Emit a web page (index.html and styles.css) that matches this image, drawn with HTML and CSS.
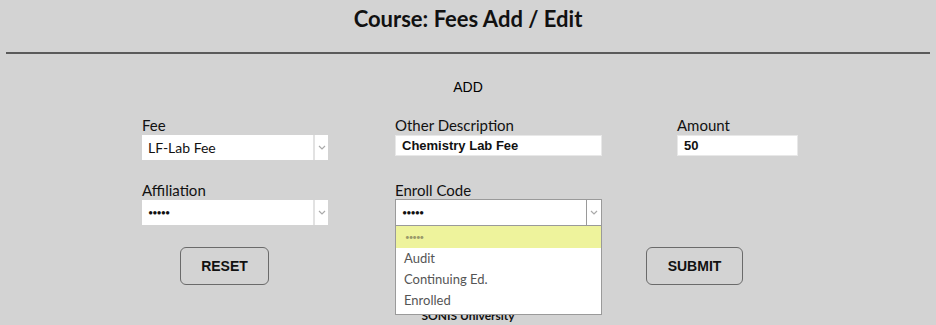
FILE: index.html
```html
<!DOCTYPE html>
<html>
<head>
<meta charset="utf-8">
<link rel="stylesheet" href="styles.css">
</head>
<body>
<div class="page">
  <h1 class="title">Course: Fees Add / Edit</h1>
  <div class="rule"></div>
  <div class="mode">ADD</div>
  <div class="form">
    <div class="field">
      <div class="label">Fee</div>
      <div class="select">
        <span class="value">LF-Lab Fee</span>
        <span class="arrow"><svg width="8" height="5" viewBox="0 0 8 5"><path d="M1 1 L4 4 L7 1" fill="none" stroke="#aaa" stroke-width="1.2"/></svg></span>
      </div>
    </div>
    <div class="field">
      <div class="label">Other Description</div>
      <div class="input wide">Chemistry Lab Fee</div>
    </div>
    <div class="field">
      <div class="label">Amount</div>
      <div class="input narrow">50</div>
    </div>
    <div class="field">
      <div class="label">Affiliation</div>
      <div class="select">
        <span class="value dots">•••••</span>
        <span class="arrow"><svg width="8" height="5" viewBox="0 0 8 5"><path d="M1 1 L4 4 L7 1" fill="none" stroke="#aaa" stroke-width="1.2"/></svg></span>
      </div>
    </div>
    <div class="field">
      <div class="label">Enroll Code</div>
      <div class="select open">
        <span class="value dots">•••••</span>
        <span class="arrow"><svg width="8" height="5" viewBox="0 0 8 5"><path d="M1 1 L4 4 L7 1" fill="none" stroke="#aaa" stroke-width="1.2"/></svg></span>
        <ul class="options">
          <li class="hl">•••••</li>
          <li>Audit</li>
          <li>Continuing Ed.</li>
          <li>Enrolled</li>
        </ul>
      </div>
    </div>
    <div class="field"></div>
  </div>
  <div class="buttons">
    <button class="btn reset">RESET</button>
    <button class="btn submit">SUBMIT</button>
  </div>
  <div class="footer">SONIS University</div>
</div>
</body>
</html>
```
FILE: styles.css
```css
html, body {
  margin: 0;
  padding: 0;
  background: #d3d3d3;
}
body {
  font-family: Lato, "Open Sans", sans-serif;
  color: #000;
}
.page {
  width: 936px;
  height: 325px;
  overflow: hidden;
}
.title {
  margin: 0;
  padding-top: 7px;
  height: 24px;
  line-height: 24px;
  font-size: 22px;
  font-weight: 700;
  text-align: center;
  color: #111;
}
.rule {
  margin: 21px 6px 0 6px;
  height: 2px;
  background: #5a5a5a;
}
.mode {
  margin-top: 25px;
  line-height: 16px;
  font-family: "Liberation Sans", Arial, sans-serif;
  font-size: 14px;
  text-align: center;
}
.form {
  margin-top: 22px;
  padding-left: 142px;
  display: grid;
  grid-template-columns: 253px 282px 140px;
  row-gap: 22px;
}
.label {
  font-size: 15px;
  line-height: 16px;
  height: 16px;
  margin: 0 0 2px 0;
  color: #111;
}
.select {
  position: relative;
  width: 186px;
  height: 25px;
  background: #fff;
  display: flex;
  align-items: center;
  box-sizing: border-box;
}
.select .value {
  flex: 1;
  padding-left: 6px;
  font-size: 14px;
  color: #111;
}
.select .dots {
  font-size: 9px;
  letter-spacing: -1px;
}
.select .arrow {
  width: 13px;
  height: 100%;
  border-left: 2px solid #e2e2e2;
  display: flex;
  align-items: center;
  justify-content: center;
}
.select.open {
  width: 207px;
  height: 27px;
  margin-top: -1px;
  border: 1px solid #9a9a9a;
}
.select.open .arrow {
  width: 14px;
  border-left: 1px solid #9a9a9a;
}
.input {
  margin-top: 2px;
  height: 21px;
  background: #fff;
  border: 1px solid #e8e8e8;
  box-sizing: border-box;
  font-family: "Liberation Sans", Arial, sans-serif;
  font-weight: 700;
  font-size: 13px;
  line-height: 19px;
  padding-left: 6px;
  color: #111;
}
.input.wide { width: 207px; }
.input.narrow { width: 121px; }
.options {
  position: absolute;
  left: -1px;
  top: 26px;
  width: 207px;
  margin: 0;
  padding: 0 0 3px 0;
  list-style: none;
  background: #fff;
  border: 1px solid #9a9a9a;
  border-top: none;
  box-sizing: border-box;
  z-index: 5;
}
.options li {
  height: 21px;
  line-height: 21px;
  padding-left: 8px;
  font-size: 13px;
  color: #555;
}
.options li.hl {
  height: 22px;
  line-height: 22px;
  background: #eef39c;
  color: #9a9a6a;
  font-size: 8px;
  letter-spacing: -1px;
  padding-left: 9px;
}
.buttons {
  margin-top: 21px;
  padding-left: 180px;
  display: flex;
  gap: 377px;
}
.btn {
  height: 38px;
  background: #d3d3d3;
  border: 1px solid #6a6a6a;
  border-radius: 6px;
  font-family: "Liberation Sans", Arial, sans-serif;
  font-weight: 700;
  font-size: 14px;
  color: #111;
  padding: 0;
}
.reset { width: 89px; }
.submit { width: 97px; }
.footer {
  margin-top: 24px;
  text-align: center;
  font-size: 12px;
  font-weight: 700;
  line-height: 14px;
  color: #111;
}
```
